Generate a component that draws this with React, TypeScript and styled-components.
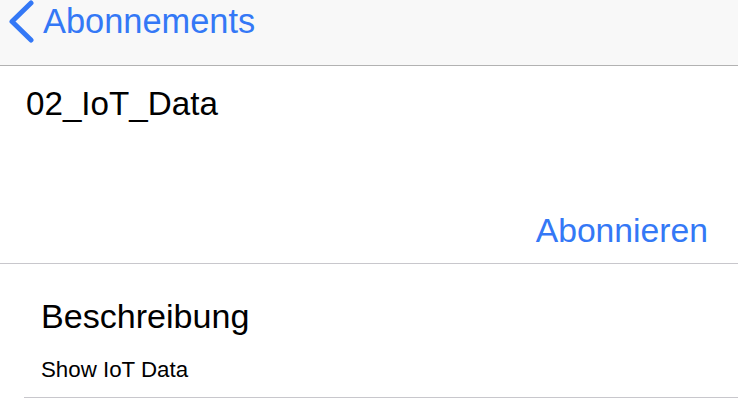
import React from "react";
import styled, { createGlobalStyle } from "styled-components";

const Global = createGlobalStyle`
  html, body { margin: 0; padding: 0; background: #ffffff; }
  body { font-family: "Liberation Sans", Arial, sans-serif; -webkit-font-smoothing: antialiased; }
  * { box-sizing: border-box; }
`;

const Page = styled.div`
  width: 738px;
  height: 409px;
  overflow: hidden;
  display: flex;
  flex-direction: column;
  background: #ffffff;
`;

const NavBar = styled.div`
  height: 66px;
  flex: 0 0 66px;
  background: #f8f8f8;
  border-bottom: 1px solid #b2b2b2;
  display: flex;
  align-items: flex-start;
`;

const BackButton = styled.button`
  display: flex;
  align-items: flex-start;
  padding: 0 0 0 8px;
  margin: 0;
  border: none;
  background: transparent;
  color: #3478f6;
  font-family: inherit;
  font-size: 34.4px;
  line-height: 37px;
  cursor: pointer;
`;

const BackLabel = styled.span`
  display: block;
  margin-top: 3px;
  margin-left: 7px;
`;

const Header = styled.div`
  display: flex;
  flex-direction: column;
  padding: 19px 30px 14px 26px;
  border-bottom: 1px solid #c8c7cc;
`;

const Title = styled.div`
  font-size: 33.2px;
  line-height: 37px;
  color: #000000;
`;

const ActionRow = styled.div`
  display: flex;
  justify-content: flex-end;
  padding-top: 90px;
`;

const ActionButton = styled.span`
  font-size: 33.7px;
  line-height: 37px;
  color: #3478f6;
`;

const Section = styled.div`
  margin-left: 24px;
  padding: 34px 0 15px 17px;
  border-bottom: 1px solid #c8c7cc;
  display: flex;
  flex-direction: column;
  gap: 22px;
`;

const SectionTitle = styled.div`
  font-size: 34.1px;
  line-height: 37px;
  color: #000000;
`;

const SectionText = styled.div`
  font-size: 22.3px;
  line-height: 25px;
  color: #000000;
`;

const Chevron = () => (
  <svg width="28" height="44" viewBox="0 0 28 44" style={{ display: "block" }}>
    <path
      d="M23 3 L4 21.5 L23 40"
      fill="none"
      stroke="#3478f6"
      strokeWidth="5"
      strokeLinecap="round"
      strokeLinejoin="round"
    />
  </svg>
);

export default function App() {
  return (
    <>
      <Global />
      <Page>
        <NavBar>
          <BackButton>
            <Chevron />
            <BackLabel>Abonnements</BackLabel>
          </BackButton>
        </NavBar>
        <Header>
          <Title>02_IoT_Data</Title>
          <ActionRow>
            <ActionButton>Abonnieren</ActionButton>
          </ActionRow>
        </Header>
        <Section>
          <SectionTitle>Beschreibung</SectionTitle>
          <SectionText>Show IoT Data</SectionText>
        </Section>
      </Page>
    </>
  );
}
